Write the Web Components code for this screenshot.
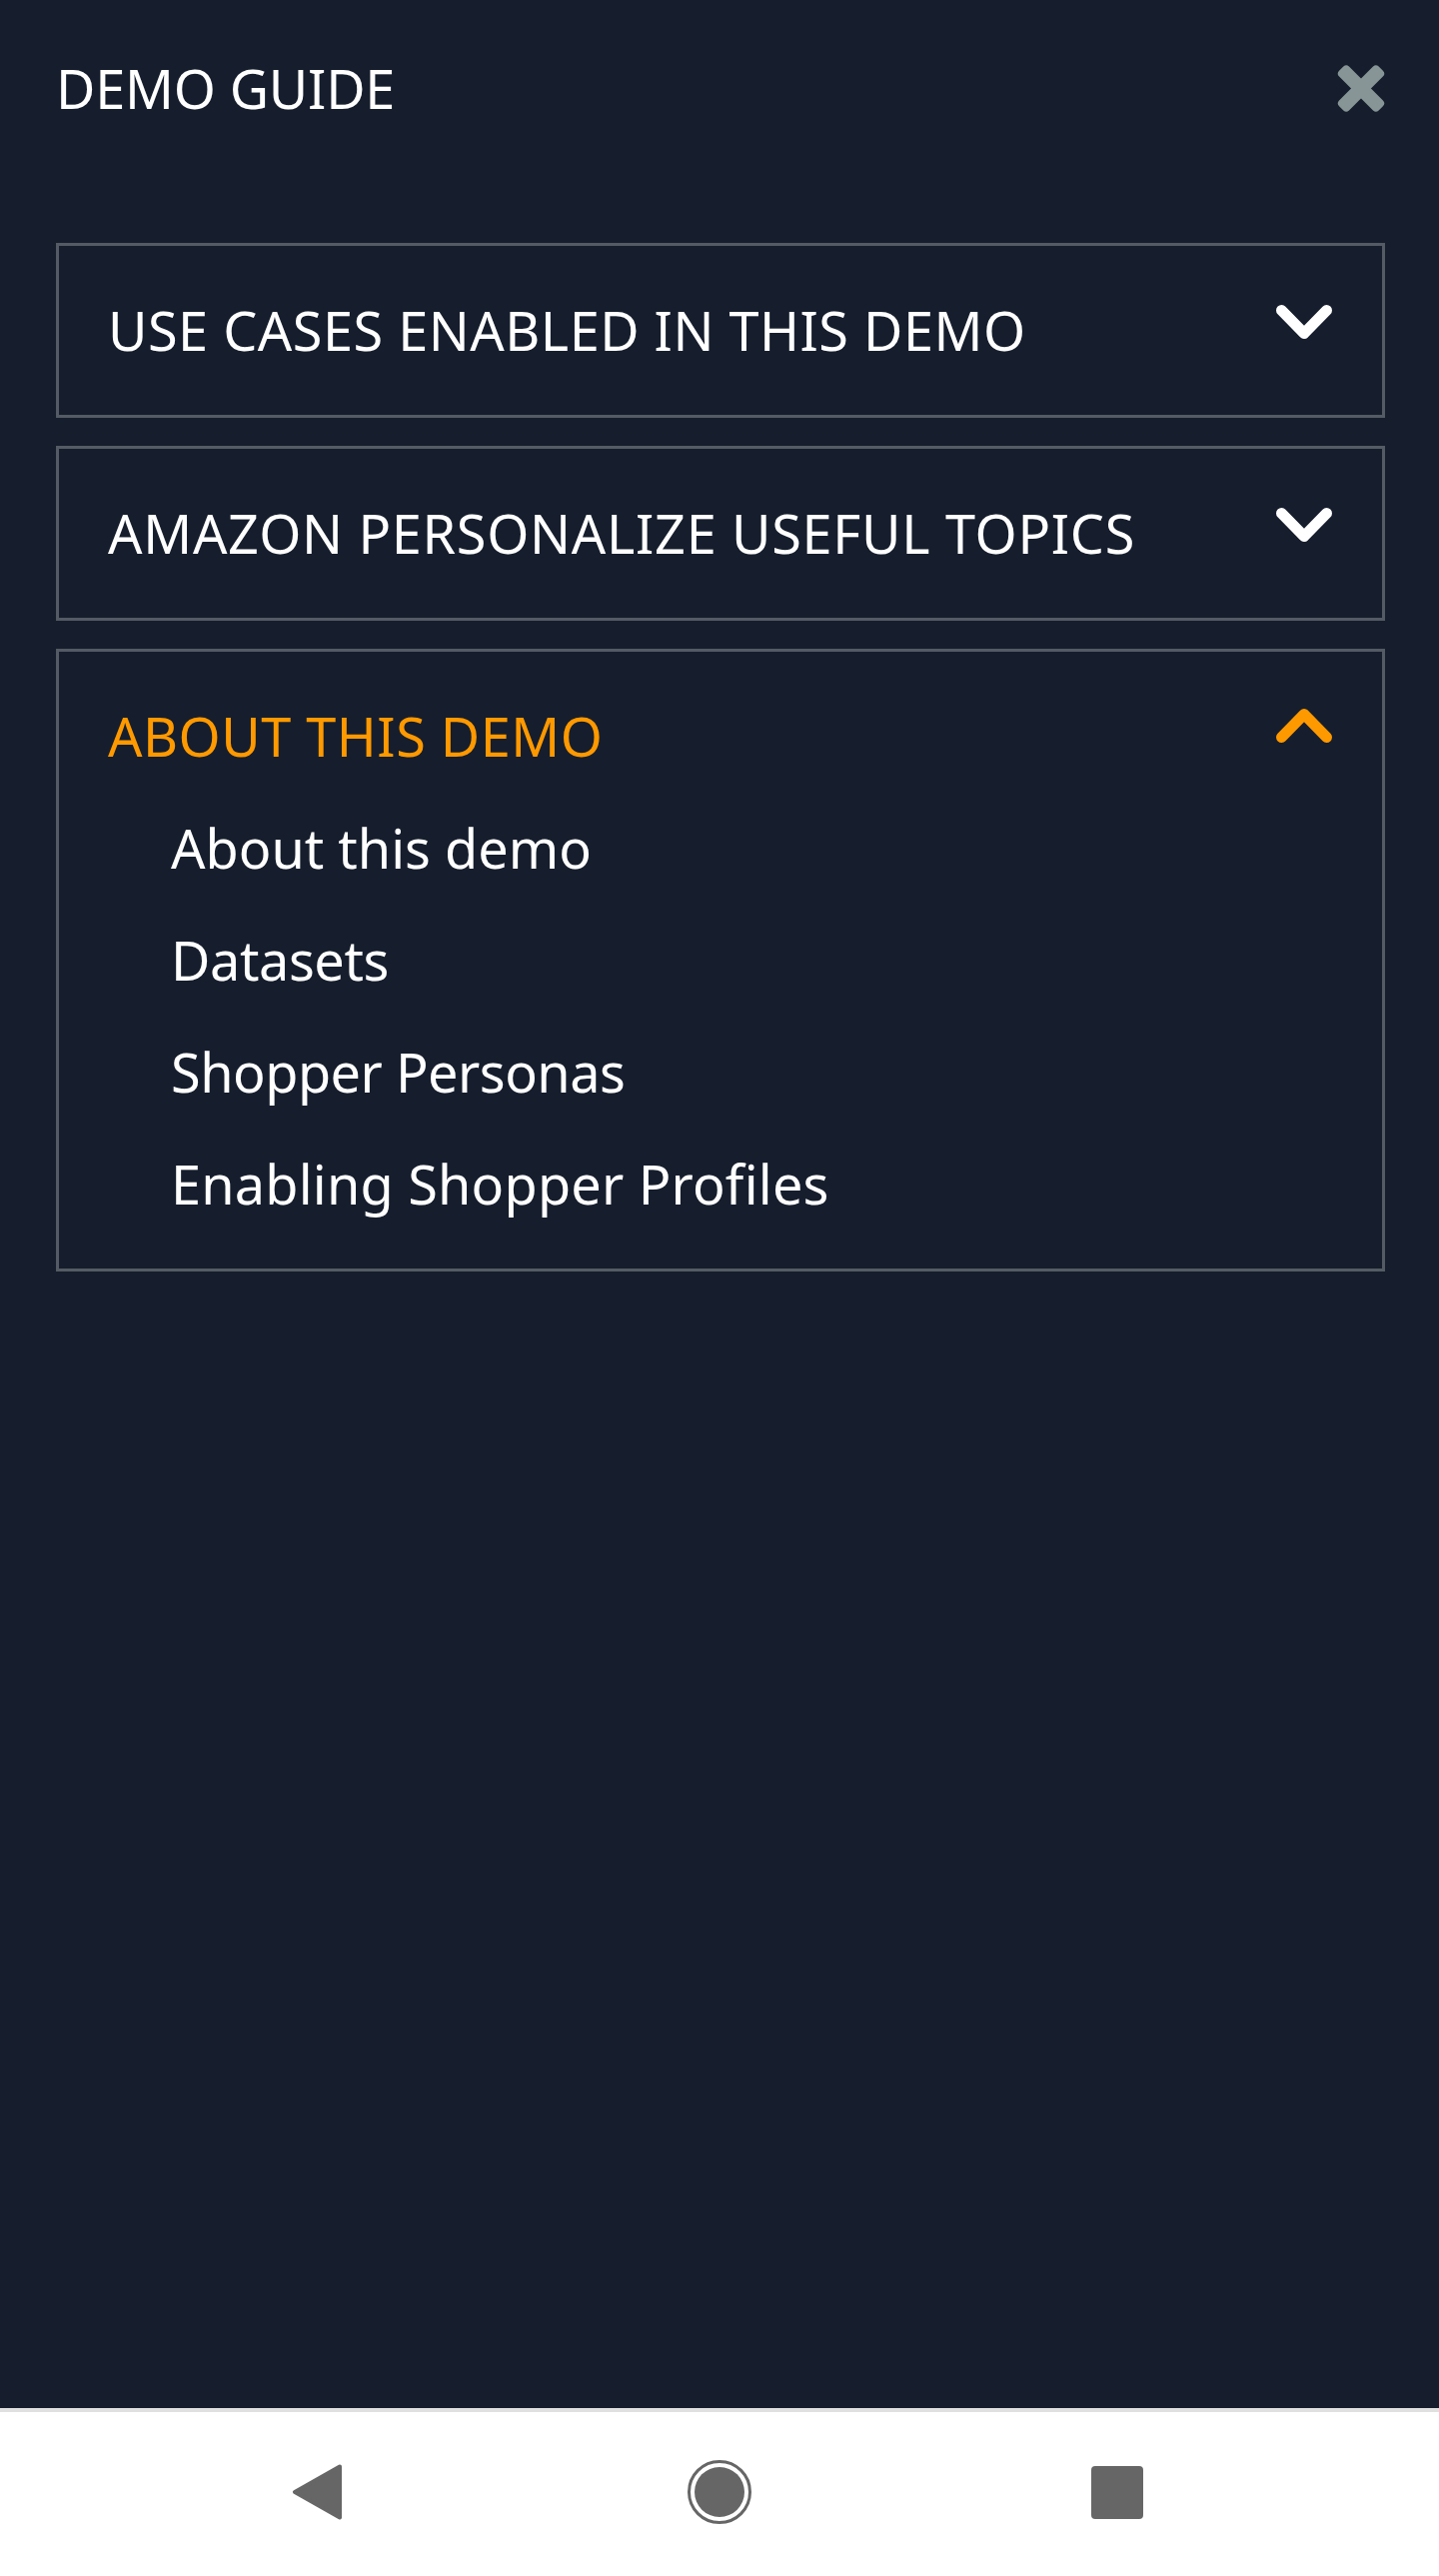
<!doctype html>
<html>
<head>
<meta charset="utf-8">
<title>Demo guide</title>
<style>
  html, body { margin: 0; background: #161e2d; }
  body { font-family: "Noto Sans", sans-serif; }
</style>
</head>
<body>
<demo-guide>
  <guide-section heading="USE CASES ENABLED IN THIS DEMO"></guide-section>
  <guide-section heading="AMAZON PERSONALIZE USEFUL TOPICS" style="letter-spacing:.7px"></guide-section>
  <guide-section heading="ABOUT THIS DEMO" open>
    <guide-item>About this demo</guide-item>
    <guide-item style="letter-spacing:-.4px">Datasets</guide-item>
    <guide-item style="letter-spacing:-.5px">Shopper Personas</guide-item>
    <guide-item style="letter-spacing:.2px">Enabling Shopper Profiles</guide-item>
  </guide-section>
</demo-guide>
<nav-bar></nav-bar>
<script>
class DemoGuide extends HTMLElement {
  constructor() {
    super();
    this.attachShadow({ mode: 'open' });
    this.shadowRoot.innerHTML = `
      <style>
        :host {
          display: block;
          height: 2409px;
          box-sizing: border-box;
          background: #161e2d;
          color: #fff;
          font: 400 54px/1 "Noto Sans", sans-serif;
          padding: 0 54px 0 56px;
        }
        header {
          display: flex;
          justify-content: space-between;
          align-items: flex-start;
          height: 243px;
        }
        h1 {
          margin: 0;
          padding-top: 51px;
          font: inherit;
          line-height: 74px;
          letter-spacing: -.2px;
        }
        svg { display: block; margin-top: 64px; }
        .list { display: flex; flex-direction: column; gap: 28px; }
      </style>
      <header>
        <h1>DEMO GUIDE</h1>
        <svg width="48" height="49" viewBox="0 0 48 49" fill="#879596">
          <rect x="-4" y="17.5" width="56" height="14" rx="4" transform="rotate(45 24 24.5)"/>
          <rect x="-4" y="17.5" width="56" height="14" rx="4" transform="rotate(-45 24 24.5)"/>
        </svg>
      </header>
      <div class="list"><slot></slot></div>
    `;
  }
}

class GuideSection extends HTMLElement {
  constructor() {
    super();
    this.attachShadow({ mode: 'open' });
  }

  connectedCallback() {
    const open = this.hasAttribute('open');
    const chevron = open
      ? 'M5.5 28.5L28 5.5L50.5 28.5'
      : 'M5.5 7.5L28 30.5L50.5 7.5';
    this.shadowRoot.innerHTML = `
      <style>
        :host {
          display: block;
          border: 3px solid #545b64;
          padding: 28px 50px 29px 49px;
          letter-spacing: .5px;
        }
        .head {
          display: flex;
          justify-content: space-between;
          align-items: flex-start;
          height: 112px;
          line-height: 112px;
          color: ${open ? '#ff9900' : '#fff'};
        }
        svg { display: block; margin-top: 29px; }
      </style>
      <div class="head">
        <span>${this.getAttribute('heading')}</span>
        <svg width="56" height="36" viewBox="0 0 56 36" fill="none" stroke="currentColor"
          stroke-width="11" stroke-linecap="round" stroke-linejoin="round"><path d="${chevron}"/></svg>
      </div>
      <slot></slot>
    `;
  }
}

class GuideItem extends HTMLElement {
  constructor() {
    super();
    this.attachShadow({ mode: 'open' });
    this.shadowRoot.innerHTML = `
      <style>
        :host {
          display: block;
          height: 112px;
          line-height: 112px;
          padding-left: 63px;
          color: #fff;
          letter-spacing: 0;
        }
      </style>
      <slot></slot>
    `;
  }
}

class NavBar extends HTMLElement {
  constructor() {
    super();
    this.attachShadow({ mode: 'open' });
    this.shadowRoot.innerHTML = `
      <style>
        :host {
          display: flex;
          align-items: center;
          height: 168px;
          box-sizing: border-box;
          border-top: 4px solid #e0e0e0;
          background: #fff;
          padding-left: 292px;
          padding-bottom: 4px;
        }
        svg { display: block; flex: none; }
        .home { margin-left: 346px; }
        .recent { margin-left: 340px; }
      </style>
      <svg width="50" height="56" viewBox="0 0 50 56" fill="#666" stroke="#666" stroke-width="4" stroke-linejoin="round">
        <path d="M48 2.5L3 28L48 53.5Z"/>
      </svg>
      <svg class="home" width="64" height="64" viewBox="0 0 64 64">
        <circle cx="32" cy="32" r="30.5" fill="none" stroke="#666" stroke-width="3"/>
        <circle cx="32" cy="32" r="25" fill="#666"/>
      </svg>
      <svg class="recent" width="52" height="53" viewBox="0 0 52 53">
        <rect width="52" height="53" rx="4" fill="#666"/>
      </svg>
    `;
  }
}

customElements.define('demo-guide', DemoGuide);
customElements.define('guide-section', GuideSection);
customElements.define('guide-item', GuideItem);
customElements.define('nav-bar', NavBar);
</script>
</body>
</html>
